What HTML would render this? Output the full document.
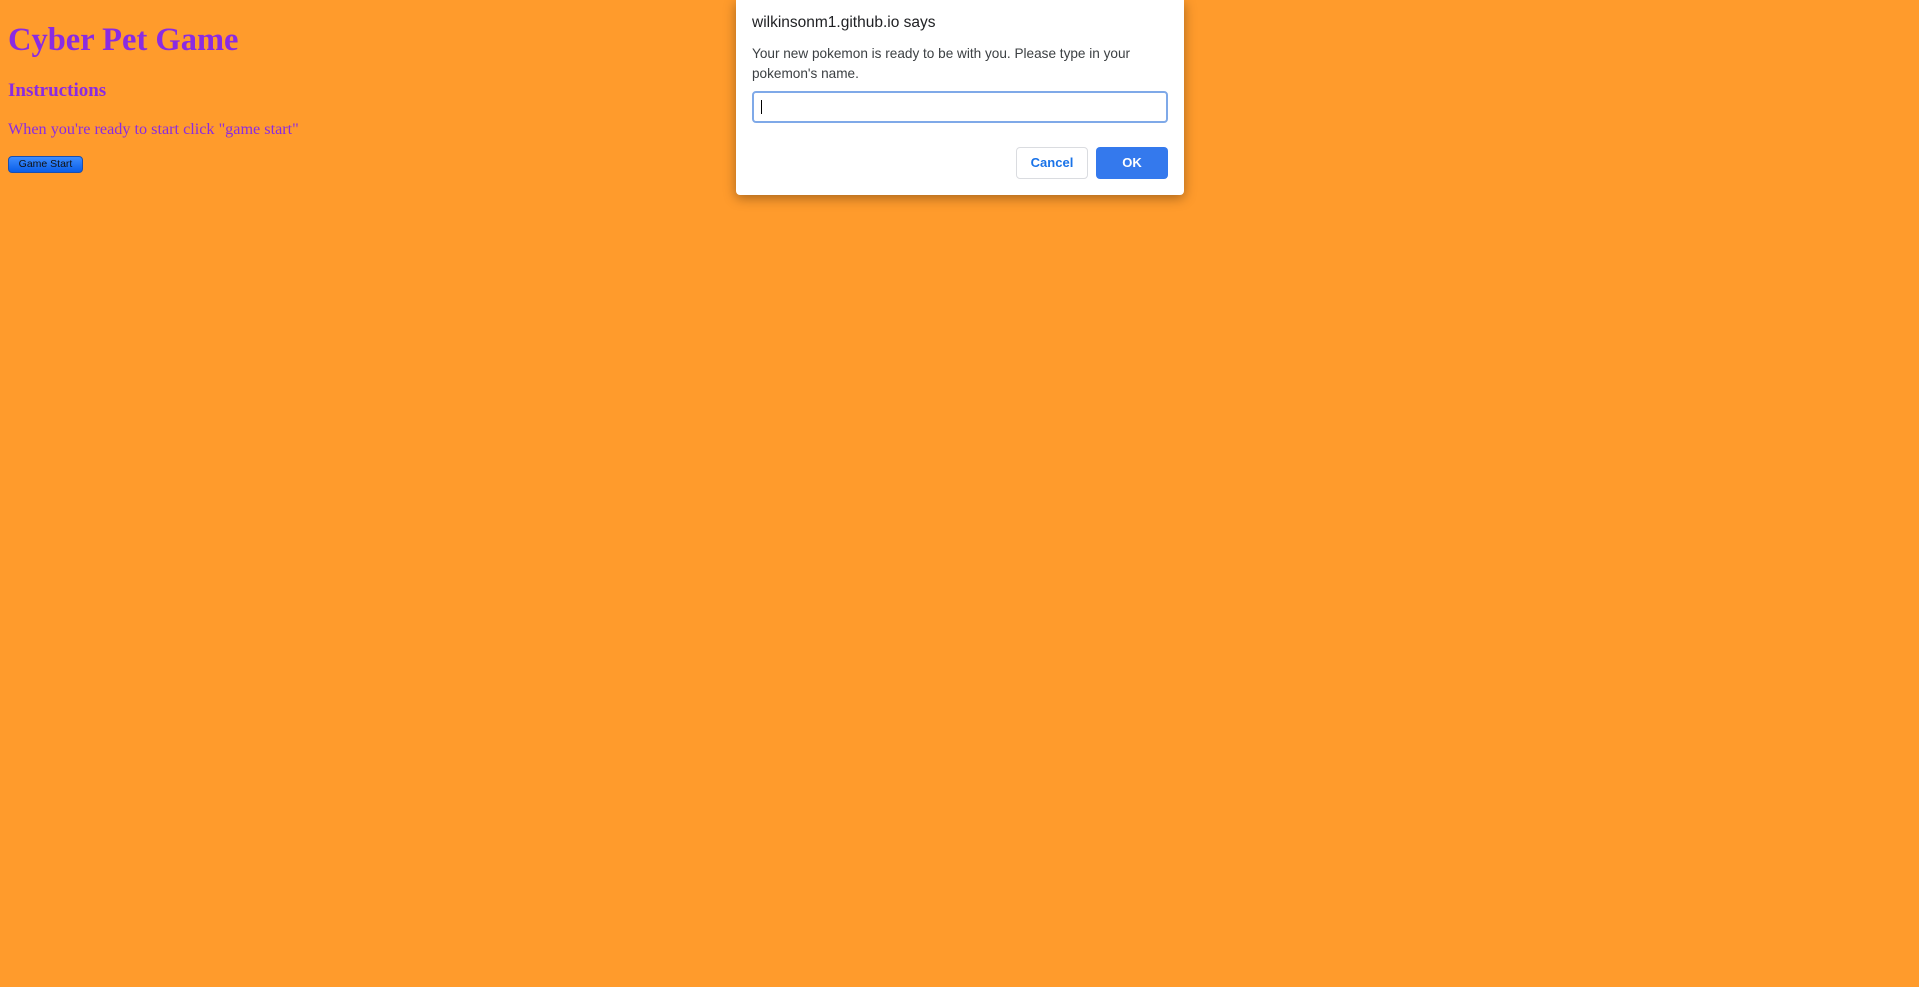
<!DOCTYPE html>
<html><head><meta charset="utf-8"><style>
html,body{margin:0;width:1919px;height:987px;background:#ff9b2c;overflow:hidden;position:relative;font-family:"Liberation Serif",serif;color:#8a2be2}
.a{position:absolute;white-space:nowrap;margin:0}
h1{font-size:32.5px;font-weight:bold;left:8px;top:19px;line-height:42px}
h3{font-size:19px;font-weight:bold;left:8px;top:79px;line-height:24px}
p{font-size:16.2px;left:8px;top:118px;line-height:22px}
.btn{left:8px;top:156px;width:75px;height:17px;border-radius:4px;background:linear-gradient(#3e8dff,#0a5ee8);border:1px solid #1a4fb0;box-sizing:border-box;font:10.5px "Liberation Sans",sans-serif;color:#111;text-align:center;line-height:15px}
.dlg{left:736px;top:0;width:448px;height:195px;background:#fff;border-radius:0 0 4px 4px;box-shadow:0 3px 12px rgba(0,0,0,.35);font-family:"Liberation Sans",sans-serif}
.t{left:16px;top:14px;font-size:15.5px;color:#202124}
.m{left:16px;top:44px;font-size:13.6px;color:#3c4043;line-height:20px;white-space:normal;width:420px}
.in{left:16px;top:91px;width:416px;height:32px;box-sizing:border-box;border:2px solid #7fa9e8;border-radius:4px}
.in i{position:absolute;left:7px;top:7px;width:1px;height:14px;background:#000}
.b{top:147px;height:32px;box-sizing:border-box;border-radius:4px;font-size:13px;font-weight:bold;text-align:center;line-height:30px}
.c{left:280px;width:72px;border:1px solid #dadce0;color:#1a73e8}
.o{left:360px;width:72px;background:#3479ed;color:#fff;line-height:32px}
</style></head><body>
<h1 class="a">Cyber Pet Game</h1>
<h3 class="a">Instructions</h3>
<p class="a">When you're ready to start click "game start"</p>
<div class="a btn">Game Start</div>
<div class="a dlg">
<div class="a t">wilkinsonm1.github.io says</div>
<div class="a m">Your new pokemon is ready to be with you. Please type in your pokemon's name.</div>
<div class="a in"><i></i></div>
<div class="a b c">Cancel</div>
<div class="a b o">OK</div>
</div>
</body></html>
